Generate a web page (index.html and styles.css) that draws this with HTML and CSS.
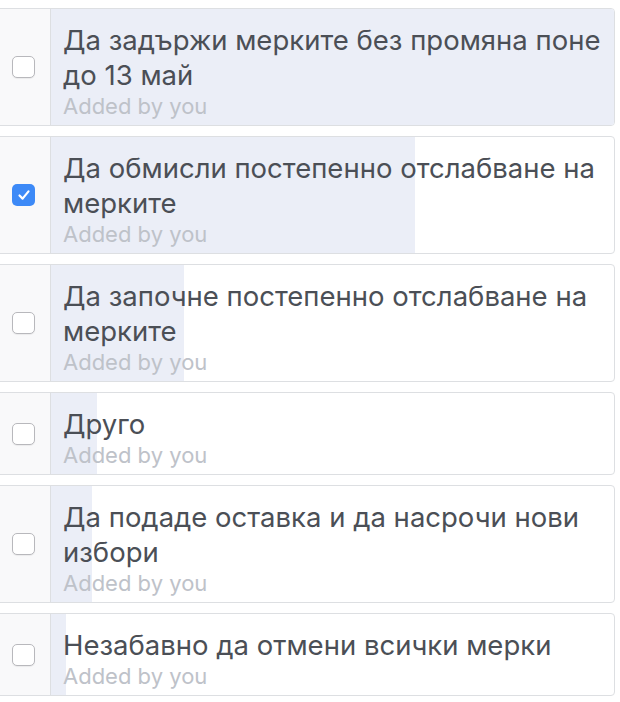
FILE: index.html
```html
<!DOCTYPE html>
<html lang="bg">
<head>
    <meta charset="UTF-8">
    <meta name="viewport" content="width=device-width, initial-scale=1.0">
    <title>Анкета</title>
    <link rel="stylesheet" href="styles.css">
</head>
<body>

    <div class="poll">
        <div class="option">
            <div class="option-check">
                <span class="box"></span>
            </div>
            <div class="option-body">
                <div class="option-bar" style="width: 100%"></div>
                <div class="option-text">Да задържи мерките без промяна поне до 13 май</div>
                <div class="option-meta">Added by you</div>
            </div>
        </div>

        <div class="option">
            <div class="option-check">
                <span class="box checked">
                    <svg viewBox="0 0 22 22" width="22" height="22"><path d="M6.5 11.5 L9.6 14.6 L15.5 7.4" fill="none" stroke="#fff" stroke-width="2.2" stroke-linecap="round" stroke-linejoin="round"/></svg>
                </span>
            </div>
            <div class="option-body">
                <div class="option-bar" style="width: 64.7%"></div>
                <div class="option-text">Да обмисли постепенно отслабване на мерките</div>
                <div class="option-meta">Added by you</div>
            </div>
        </div>

        <div class="option">
            <div class="option-check">
                <span class="box"></span>
            </div>
            <div class="option-body">
                <div class="option-bar" style="width: 23.6%"></div>
                <div class="option-text">Да започне постепенно отслабване на мерките</div>
                <div class="option-meta">Added by you</div>
            </div>
        </div>

        <div class="option">
            <div class="option-check">
                <span class="box"></span>
            </div>
            <div class="option-body">
                <div class="option-bar" style="width: 8.2%"></div>
                <div class="option-text">Друго</div>
                <div class="option-meta">Added by you</div>
            </div>
        </div>

        <div class="option">
            <div class="option-check">
                <span class="box"></span>
            </div>
            <div class="option-body">
                <div class="option-bar" style="width: 7.3%"></div>
                <div class="option-text">Да подаде оставка и да насрочи нови избори</div>
                <div class="option-meta">Added by you</div>
            </div>
        </div>

        <div class="option">
            <div class="option-check">
                <span class="box"></span>
            </div>
            <div class="option-body">
                <div class="option-bar" style="width: 2.7%"></div>
                <div class="option-text">Незабавно да отмени всички мерки</div>
                <div class="option-meta">Added by you</div>
            </div>
        </div>
    </div>

</body>
</html>
```

FILE: styles.css
```css
html, body {
    margin: 0;
    padding: 0;
    background-color: #fff;
    font-family: Inter, 'Liberation Sans', Arial, sans-serif;
}
.poll {
    padding-top: 8px;
}
.option {
    display: flex;
    margin: 0 5px 10px -4px;
    border: 1px solid #dddfe2;
    border-radius: 4px;
    background-color: #fff;
    overflow: hidden;
}
.option-check {
    width: 54px;
    flex-shrink: 0;
    display: flex;
    align-items: center;
    padding-left: 15px;
    box-sizing: border-box;
    background-color: #f9f9fa;
    border-right: 1px solid #dddfe2;
}
.box {
    display: block;
    width: 21px;
    height: 20px;
    border: 1px solid #b8b8bc;
    border-radius: 5px;
    background-color: #fff;
    box-shadow: 0 1px 1px rgba(0, 0, 0, 0.06);
}
.box.checked {
    width: 23px;
    height: 22px;
    border: none;
    background-color: #3d8af7;
    box-shadow: none;
}
.box svg {
    display: block;
    margin: 0 auto;
}
.option-body {
    flex: 1;
    position: relative;
    padding: 14px 12px 5px 12px;
}
.option-bar {
    position: absolute;
    left: 0;
    top: 0;
    bottom: 0;
    background-color: #ebeef7;
}
.option-text {
    position: relative;
    font-size: 27.5px;
    line-height: 35px;
    color: #4b4f56;
}
.option-meta {
    position: relative;
    font-size: 22px;
    line-height: 27px;
    color: #bec2c9;
}
```
